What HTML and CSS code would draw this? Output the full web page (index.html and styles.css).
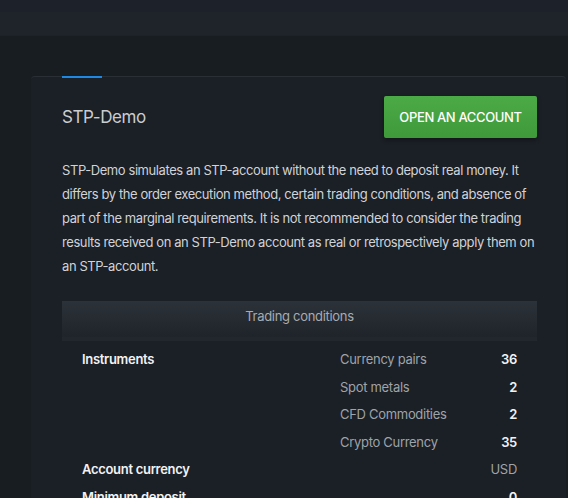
FILE: index.html
```html
<!DOCTYPE html>
<html lang="en">

<head>
    <meta charset="UTF-8">
    <meta name="viewport" content="width=device-width, initial-scale=1.0">
    <title>STP-Demo</title>
    <link rel="stylesheet" href="styles.css">
</head>

<body>
    <!-- Top navigation (collapsed) -->
    <div class="topbar">
        <div class="topbar-band"></div>
    </div>

    <div class="card">
        <div class="tab-indicator"></div>

        <div class="card-head">
            <h2 class="title">STP-Demo</h2>
            <button class="open-btn">OPEN AN ACCOUNT</button>
        </div>

        <p class="desc">STP-Demo simulates an STP-account without the need to deposit real money. It differs by the order execution method, certain trading conditions, and absence of part of the marginal requirements. It is not recommended to consider the trading results received on an STP-Demo account as real or retrospectively apply them on an STP-account.</p>

        <div class="conditions">
            <div class="conditions-head">Trading conditions</div>

            <div class="rows">
                <div class="row">
                    <div class="row-name">Instruments</div>
                    <div class="row-list">
                        <div class="item"><span class="item-label">Currency pairs</span><span class="item-value">36</span></div>
                        <div class="item"><span class="item-label">Spot metals</span><span class="item-value">2</span></div>
                        <div class="item"><span class="item-label">CFD Commodities</span><span class="item-value">2</span></div>
                        <div class="item"><span class="item-label">Crypto Currency</span><span class="item-value">35</span></div>
                    </div>
                </div>

                <div class="row">
                    <div class="row-name">Account currency</div>
                    <div class="row-list">
                        <div class="item"><span class="item-label"></span><span class="item-value muted">USD</span></div>
                    </div>
                </div>

                <div class="row">
                    <div class="row-name">Minimum deposit</div>
                    <div class="row-list">
                        <div class="item"><span class="item-label"></span><span class="item-value">0</span></div>
                    </div>
                </div>
            </div>
        </div>
    </div>
</body>

</html>
```

FILE: styles.css
```css
body {
    margin: 0;
    font-family: Inter, "Liberation Sans", sans-serif;
    letter-spacing: -0.3px;
    background-color: #181d22;
    color: #d2d5d9;
    height: 498px;
    overflow: hidden;
}

.topbar {
    height: 36px;
    background-color: #1d222a;
    padding-top: 12px;
    box-sizing: border-box;
}

.topbar-band {
    height: 23px;
    background-color: #1f242b;
}

.card {
    margin: 40px 2px 0 31px;
    padding: 0 29px 0 31px;
    background-color: #1b1f26;
    border-top: 1px solid #2a2f36;
    border-radius: 4px 4px 0 0;
    min-height: 430px;
}

.tab-indicator {
    width: 40px;
    height: 2px;
    margin-top: -1px;
    background-color: #1e88e5;
}

.card-head {
    display: flex;
    justify-content: space-between;
    align-items: center;
    margin-top: 18px;
}

.title {
    margin: 0;
    font-size: 17px;
    font-weight: 400;
    letter-spacing: -0.4px;
    color: #c9cdd1;
}

.open-btn {
    width: 153px;
    height: 42px;
    border: none;
    border-radius: 2px;
    background: linear-gradient(#4caa46, #3f9a3a);
    box-shadow: 0 2px 4px rgba(0, 0, 0, 0.35);
    color: #fff;
    font-family: inherit;
    font-size: 13px;
    font-weight: 500;
    letter-spacing: -0.35px;
    cursor: pointer;
}

.desc {
    margin: 20px 0 0;
    font-size: 13px;
    line-height: 24px;
    letter-spacing: -0.42px;
    color: #d0d3d7;
}

.conditions {
    margin-top: 23px;
}

.conditions-head {
    height: 40px;
    padding-bottom: 6px;
    box-sizing: border-box;
    line-height: 30px;
    text-align: center;
    font-size: 13px;
    color: #a7abb0;
    background: linear-gradient(#2c3239, #1f242a);
    border-bottom: 4px solid #22272d;
}

.rows {
    padding: 5px 20px 0;
}

.row {
    display: flex;
}

.row-name {
    flex: 1;
    font-size: 13px;
    font-weight: 600;
    color: #f1f2f4;
    line-height: 27.5px;
}

.row-list {
    width: 177px;
}

.item {
    display: flex;
    justify-content: space-between;
    font-size: 13px;
    line-height: 27.5px;
}

.item-label {
    color: #9fa4a9;
}

.item-value {
    font-weight: 600;
    color: #f1f2f4;
}

.item-value.muted {
    font-weight: 400;
    color: #9fa4a9;
}
```
